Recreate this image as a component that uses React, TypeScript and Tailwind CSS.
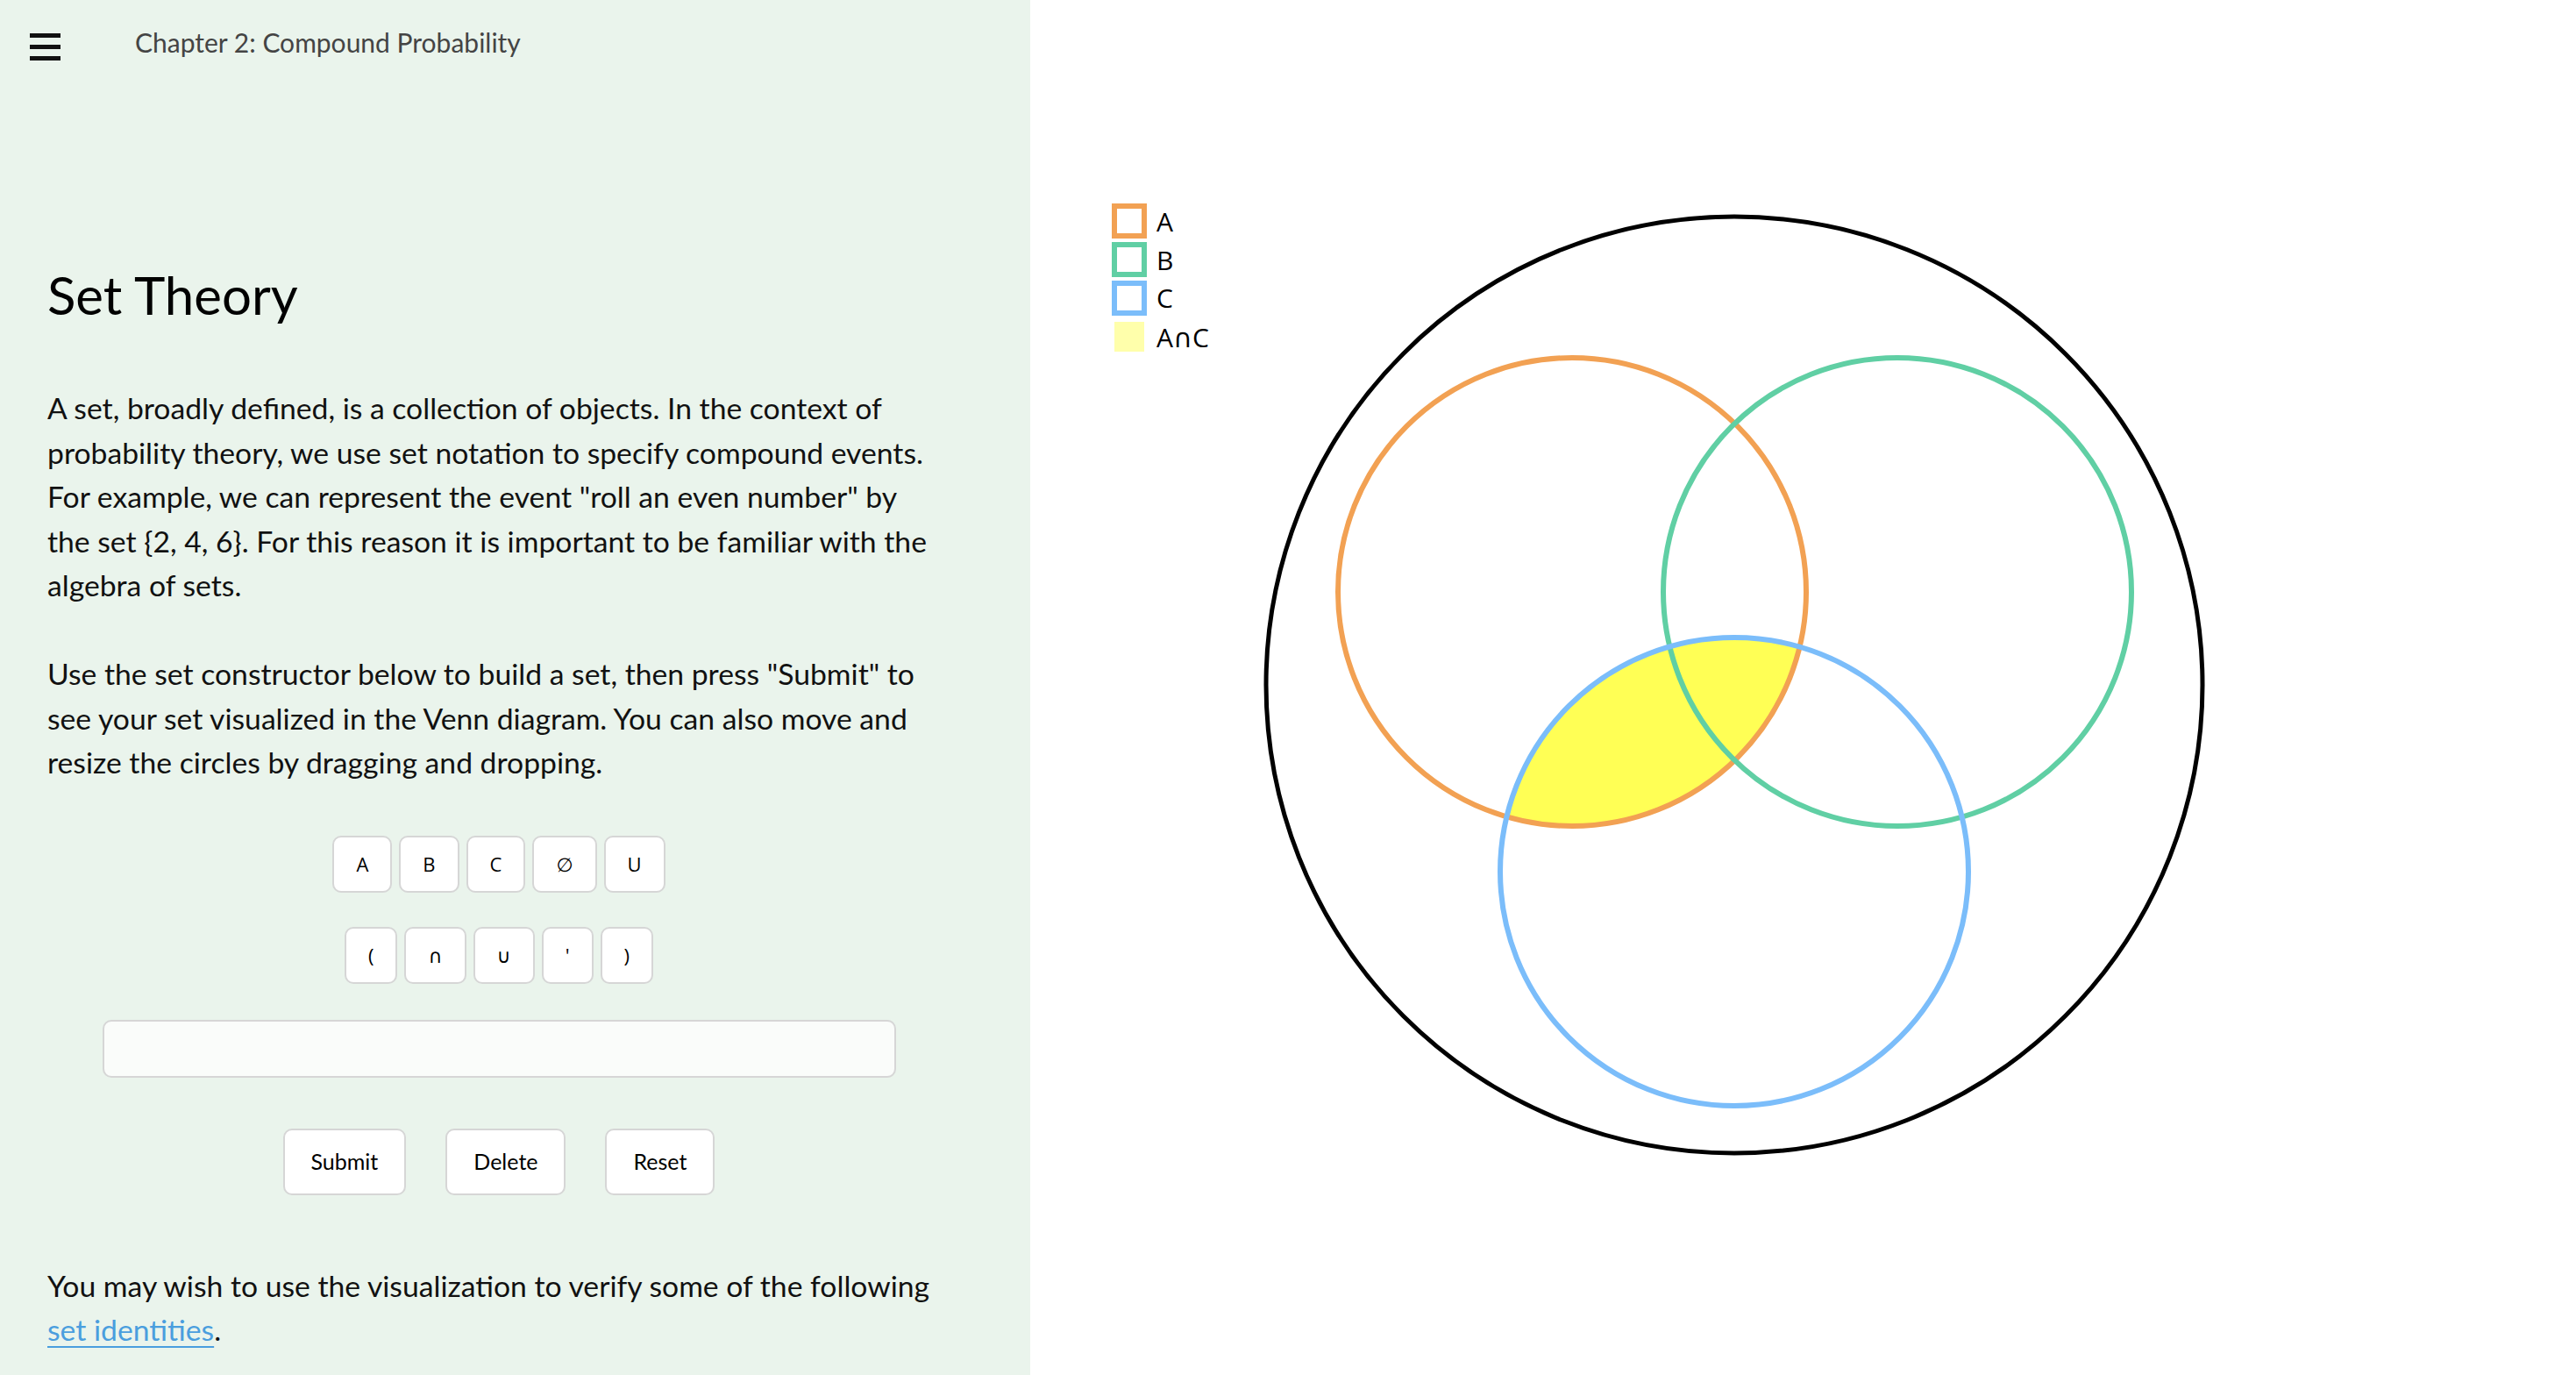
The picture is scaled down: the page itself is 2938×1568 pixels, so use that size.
import React from 'react'

const setKeys = ['A', 'B', 'C', '∅', 'U']
const opKeys = ['(', '∩', '∪', "'", ')']

function KeyButton({ label }: { label: string }) {
  return (
    <button className="h-[65px] px-[25px] rounded-[10px] border-2 border-[#d6d6d6] bg-white text-[22px] text-black font-['Open_Sans','DejaVu_Sans',sans-serif]">
      {label}
    </button>
  )
}

function ActionButton({ label }: { label: string }) {
  return (
    <button className="h-[76px] px-[30px] rounded-[10px] border-2 border-[#d6d6d6] bg-white text-[25px] text-black">
      {label}
    </button>
  )
}

function Venn() {
  return (
    <svg width="1763" height="1568" viewBox="1175 0 1763 1568" className="block">
      <defs>
        <clipPath id="clipA">
          <circle cx="1793" cy="675" r="267" />
        </clipPath>
      </defs>

      {/* legend */}
      <rect x="1271" y="235" width="34" height="34" fill="none" stroke="#f2a153" strokeWidth="6" />
      <rect x="1271" y="279" width="34" height="34" fill="none" stroke="#60cfa4" strokeWidth="6" />
      <rect x="1271" y="323" width="34" height="34" fill="none" stroke="#7bbdfa" strokeWidth="6" />
      <rect x="1271" y="367" width="34" height="34" fill="#ffffab" />
      <g fontFamily="'Open Sans', 'DejaVu Sans', sans-serif" fontSize="30" fill="#000">
        <text x="1319" y="264">A</text>
        <text x="1319" y="308">B</text>
        <text x="1319" y="351">C</text>
        <text x="1319" y="396">A∩C</text>
      </g>

      {/* universe */}
      <circle cx="1978" cy="781" r="534" fill="none" stroke="#000" strokeWidth="5" />

      {/* A ∩ C */}
      <circle cx="1978" cy="994" r="267" fill="#ffff55" clipPath="url(#clipA)" />

      <circle cx="1793" cy="675" r="267" fill="none" stroke="#f2a153" strokeWidth="6" />
      <circle cx="2164" cy="675" r="267" fill="none" stroke="#60cfa4" strokeWidth="6" />
      <circle cx="1978" cy="994" r="267" fill="none" stroke="#7bbdfa" strokeWidth="6" />
    </svg>
  )
}

export default function App() {
  return (
    <div className="flex w-[2938px] h-[1568px] overflow-hidden bg-white font-['Lato','Noto_Sans',sans-serif]">
      {/* left panel */}
      <aside className="w-[1175px] shrink-0 h-full bg-[#eaf4ec] flex flex-col">
        <header className="flex items-center h-[100px] pl-[34px] pt-[6px]">
          <div className="flex flex-col justify-between w-[35px] h-[31px]">
            <span className="block h-[5px] bg-[#111]" />
            <span className="block h-[5px] bg-[#111]" />
            <span className="block h-[5px] bg-[#111]" />
          </div>
          <span className="ml-[85px] -mt-[9px] text-[30px] text-[#444]">Chapter 2: Compound Probability</span>
        </header>

        <div className="w-[1030px] pl-[54px] box-content">
          <h1 className="mt-[200px] text-[60px] leading-[72px] text-black">Set Theory</h1>

          <div className="mt-[68px] max-w-[1016px] text-[33.7px] leading-[50.6px] text-[#111]">
            <p>
              A set, broadly defined, is a collection of objects. In the context of probability theory, we use set
              notation to specify compound events. For example, we can represent the event "roll an even number" by
              the set {'{'}2, 4, 6{'}'}. For this reason it is important to be familiar with the algebra of sets.
            </p>
            <p className="mt-[50px]">
              Use the set constructor below to build a set, then press "Submit" to see your set visualized in the Venn
              diagram. You can also move and resize the circles by dragging and dropping.
            </p>
          </div>

          <div className="mt-[58px] flex justify-center gap-[8px]">
            {setKeys.map(k => <KeyButton key={k} label={k} />)}
          </div>
          <div className="mt-[39px] flex justify-center gap-[8px]">
            {opKeys.map(k => <KeyButton key={k} label={k} />)}
          </div>

          <div className="mt-[41px] flex justify-center">
            <input className="w-[905px] h-[66px] rounded-[10px] border-2 border-[#d6d6d6] bg-[#fafcfa] outline-none px-4 text-[25px]" />
          </div>

          <div className="mt-[58px] flex justify-center gap-[45px]">
            <ActionButton label="Submit" />
            <ActionButton label="Delete" />
            <ActionButton label="Reset" />
          </div>

          <p className="mt-[78px] max-w-[1016px] text-[33.7px] leading-[50.6px] text-[#111]">
            You may wish to use the visualization to verify some of the following{' '}
            <a href="#" className="text-[#4a9ede] underline decoration-2 underline-offset-[6px]">set identities</a>.
          </p>
        </div>
      </aside>

      {/* right panel */}
      <main className="flex-1 h-full">
        <Venn />
      </main>
    </div>
  )
}
